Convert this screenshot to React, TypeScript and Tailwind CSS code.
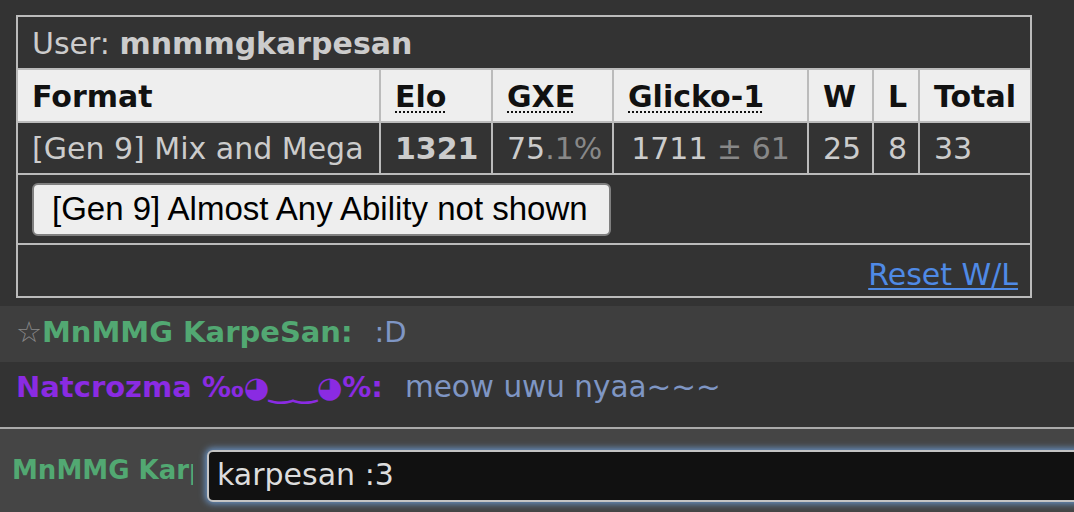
export default function App() {
  const cell = "border-2 border-[#bbb] px-[14px] whitespace-nowrap";
  const abbr = "underline decoration-dotted decoration-[2px] underline-offset-[4px]";
  return (
    <div className="w-[1074px] h-[512px] overflow-hidden bg-[#333] flex flex-col font-['DejaVu_Sans',Verdana,sans-serif] text-[29px] leading-[34px]">
      <div className="h-[306px] shrink-0 pt-[15px] pl-[16px] text-[30px]">
        <table className="table-fixed border-collapse w-[1016px]">
          <colgroup>
            <col className="w-[363px]" />
            <col className="w-[112px]" />
            <col className="w-[121px]" />
            <col className="w-[195px]" />
            <col className="w-[65px]" />
            <col className="w-[46px]" />
            <col className="w-[112px]" />
          </colgroup>
          <tbody>
            <tr className="h-[53px]">
              <td colSpan={7} className={`${cell} text-[#ccc] pt-[3px]`}>
                User: <strong>mnmmgkarpesan</strong>
              </td>
            </tr>
            <tr className="h-[53px] bg-[#eee] text-[#111] font-bold">
              <th className={`${cell} text-left pt-[3px]`}>Format</th>
              <th className={`${cell} text-left pt-[3px]`}>
                <span className={abbr}>Elo</span>
              </th>
              <th className={`${cell} text-left pt-[3px]`}>
                <span className={abbr}>GXE</span>
              </th>
              <th className={`${cell} text-left pt-[3px]`}>
                <span className={abbr}>Glicko-1</span>
              </th>
              <th className={`${cell} text-left pt-[3px]`}>W</th>
              <th className={`${cell} text-left pt-[3px]`}>L</th>
              <th className={`${cell} text-left pt-[3px]`}>Total</th>
            </tr>
            <tr className="h-[52px] text-[#ccc]">
              <td className={`${cell} pt-[2px]`}>[Gen 9] Mix and Mega</td>
              <td className={`${cell} font-bold pt-[2px]`}>1321</td>
              <td className={`${cell} pt-[2px]`}>
                75<span className="text-[#888]">.1%</span>
              </td>
              <td className={`${cell} text-center pt-[2px]`}>
                1711 <span className="text-[#888]">± 61</span>
              </td>
              <td className={`${cell} pt-[2px]`}>25</td>
              <td className={`${cell} pt-[2px]`}>8</td>
              <td className={`${cell} pt-[2px]`}>33</td>
            </tr>
            <tr className="h-[70px]">
              <td colSpan={7} className={`${cell}`}>
                <button className="h-[53px] w-[579px] rounded-[6px] border-2 border-[#808080] bg-[#eee] pl-[18px] text-left font-['Liberation_Sans',Arial,sans-serif] text-[33px] leading-[38px] text-black">
                  [Gen 9] Almost Any Ability not shown
                </button>
              </td>
            </tr>
            <tr className="h-[53px]">
              <td colSpan={7} className={`${cell} text-right pr-[12px] pt-[8px]`}>
                <a className="text-[#4f8ae6] underline decoration-[2px] underline-offset-[3px]">Reset W/L</a>
              </td>
            </tr>
          </tbody>
        </table>
      </div>

      <div className="h-[56px] shrink-0 bg-[#3e3e3e] pl-[16px] pt-[9px] whitespace-nowrap">
        <span className="text-[#888]">☆</span>
        <strong className="text-[#52a872]">MnMMG KarpeSan:</strong>
        <span className="ml-[22px] text-[#7f96c4]">:D</span>
      </div>

      <div className="h-[65px] shrink-0 pl-[16px] pt-[8px] whitespace-nowrap">
        <strong className="text-[#8a2be2]">Natcrozma ‰◕‿‿◕%:</strong>
        <span className="ml-[22px] text-[29.5px] text-[#7f96c4]">meow uwu nyaa~~~</span>
      </div>

      <div className="flex-1 border-t-2 border-[#aaa] bg-[#454545] flex items-start pt-[21px]">
        <div className="w-[193px] shrink-0 overflow-hidden whitespace-nowrap pl-[12px] pt-[3px] text-[26px] font-bold text-[#52a872]">
          MnMMG KarpeSan:
        </div>
        <div className="ml-[14px] h-[52px] flex-1 min-w-[900px] rounded-[6px] border-2 border-[#c4c4c4] bg-[#111] pl-[8px] pb-[2px] flex items-center text-[30px] text-[#ddd] shadow-[0_0_6px_2px_rgba(110,160,220,0.8)]">
          karpesan :3
        </div>
      </div>
    </div>
  );
}
